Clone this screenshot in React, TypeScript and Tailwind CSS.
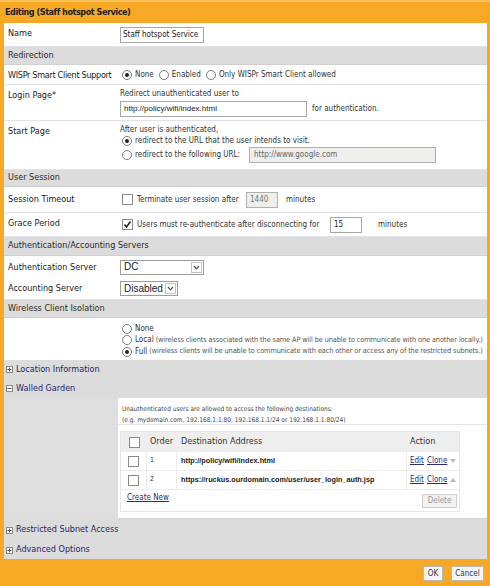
import React from "react";

const font = { fontFamily: '"DejaVu Sans Condensed", "DejaVu Sans", sans-serif' } as const;
const arial = { fontFamily: '"Liberation Sans", Arial, sans-serif' } as const;

const Radio = ({ on }: { on?: boolean }) => (
  <span className="inline-flex w-[10px] h-[10px] rounded-full border border-[#7a7a7a] bg-white items-center justify-center shrink-0">
    {on && <span className="w-[4px] h-[4px] rounded-full bg-[#222]" />}
  </span>
);

const Check = ({ on }: { on?: boolean }) => (
  <span className="inline-flex w-[11px] h-[11px] border border-[#8a8a8a] bg-white items-center justify-center shrink-0">
    {on && (
      <svg width="9" height="9" viewBox="0 0 9 9">
        <path d="M1.5 4.5 L3.5 7 L7.5 1.5" fill="none" stroke="#222" strokeWidth="1.6" />
      </svg>
    )}
  </span>
);

const Select = ({ value, w }: { value: string; w: string }) => (
  <div className={`flex items-center h-[15px] border border-[#9c9c9c] bg-white ${w}`}>
    <span className="flex-1 pl-[3px] text-[10px] text-[#222] leading-none" style={arial}>
      {value}
    </span>
    <span className="w-[11px] h-[11px] mr-[1px] border border-[#c4c4c4] flex items-center justify-center">
      <svg width="7" height="5" viewBox="0 0 7 5">
        <path d="M1 1 L3.5 3.8 L6 1" fill="none" stroke="#555" strokeWidth="1.2" />
      </svg>
    </span>
  </div>
);

const Box = ({ minus }: { minus?: boolean }) => (
  <span className="inline-flex w-[7px] h-[7px] border border-[#8a8a8a] bg-white items-center justify-center shrink-0 mr-[3px]">
    <svg width="5" height="5" viewBox="0 0 5 5">
      <path d="M0.5 2.5 H4.5" stroke="#555" strokeWidth="1" />
      {!minus && <path d="M2.5 0.5 V4.5" stroke="#555" strokeWidth="1" />}
    </svg>
  </span>
);

const Label = ({ children, pt }: { children: React.ReactNode; pt: string }) => (
  <div className={`w-[114px] shrink-0 pl-[4px] text-[9px] leading-[11px] text-[#1a1a1a] whitespace-nowrap ${pt}`}>{children}</div>
);

const Section = ({ children, h }: { children: React.ReactNode; h: string }) => (
  <div className={`flex items-center bg-[#dcdcdc] pl-[4px] text-[9px] text-[#2a2a2a] border-b border-[#d0d0d0] ${h}`}>{children}</div>
);

const Fold = ({ children, h, minus }: { children: React.ReactNode; h: string; minus?: boolean }) => (
  <div className={`flex items-center bg-[#dcdcdc] pl-[2px] text-[9px] text-[#24246a] ${h}`}>
    <Box minus={minus} />
    {children}
  </div>
);

export default function App() {
  return (
    <div className="w-[490px] h-[586px] bg-[#f7a825] flex flex-col overflow-hidden" style={font}>
      <div className="h-[23px] shrink-0 border-t-2 border-[#fbc25c] px-[5px] flex items-center font-bold text-[9px] tracking-[-0.45px] text-[#222]">
        Editing (Staff hotspot Service)
      </div>
      <div className="ml-[4px] mr-[3px] bg-white flex flex-col shrink-0">
        <div className="flex h-[24px] border-b border-[#e2e2e8]">
          <Label pt="pt-[5px]">Name</Label>
          <div className="pt-[4px] pl-[2px]">
            <div className="w-[84px] h-[16px] border border-[#a8a8a8] flex items-center pl-[2px] text-[8px] text-[#222]">Staff hotspot Service</div>
          </div>
        </div>
        <Section h="h-[18px]">Redirection</Section>
        <div className="flex h-[20px] border-b border-[#e2e2e8]">
          <Label pt="pt-[5px]">
            <span className="tracking-[-0.3px]">WISPr Smart Client Support</span>
          </Label>
          <div className="flex items-center pl-[4px] text-[8px] text-[#333]">
            <Radio on />
            <span className="ml-[3px] mr-[5px]">None</span>
            <Radio />
            <span className="ml-[3px] mr-[5px]">Enabled</span>
            <Radio />
            <span className="ml-[3px]">Only WISPr Smart Client allowed</span>
          </div>
        </div>
        <div className="flex h-[36px] border-b border-[#e2e2e8]">
          <Label pt="pt-[5px]">Login Page*</Label>
          <div className="pl-[2px] pt-[3px] text-[8px] text-[#333]">
            <div className="leading-[11px]">Redirect unauthenticated user to</div>
            <div className="flex items-center mt-[2px]">
              <div className="w-[187px] h-[16px] border border-[#a8a8a8] flex items-center pl-[3px] text-[8px] text-[#222]" style={arial}>
                http://policy/wifi/index.html
              </div>
              <span className="ml-[5px]">for authentication.</span>
            </div>
          </div>
        </div>
        <div className="flex h-[49px] border-b border-[#e2e2e8]">
          <Label pt="pt-[5px]">Start Page</Label>
          <div className="pl-[2px] pt-[3px] text-[8px] text-[#333]">
            <div className="leading-[11px]">After user is authenticated,</div>
            <div className="flex items-center pl-[2px] h-[12px]">
              <Radio on />
              <span className="ml-[3px]">redirect to the URL that the user intends to visit.</span>
            </div>
            <div className="flex items-center pl-[2px] h-[16px]">
              <Radio />
              <span className="ml-[3px] w-[114px]">redirect to the following URL:</span>
              <div className="w-[187px] h-[16px] border border-[#b0b0b0] bg-[#eeeeec] flex items-center pl-[4px] text-[#666]">http://www.google.com</div>
            </div>
          </div>
        </div>
        <Section h="h-[17px]">User Session</Section>
        <div className="flex h-[26px] border-b border-[#e2e2e8]">
          <Label pt="pt-[7px]">Session Timeout</Label>
          <div className="flex items-center pl-[4px] text-[8px] text-[#333]">
            <Check />
            <span className="ml-[4px] w-[105px]">Terminate user session after</span>
            <div className="ml-[4px] w-[32px] h-[16px] border border-[#b0b0b0] bg-[#eeeeec] flex items-center pl-[3px] text-[#777]">1440</div>
            <span className="ml-[8px]">minutes</span>
          </div>
        </div>
        <div className="flex h-[24px] border-b border-[#e2e2e8]">
          <Label pt="pt-[5px]">Grace Period</Label>
          <div className="flex items-center pl-[4px] text-[8px] text-[#333]">
            <Check on />
            <span className="ml-[4px] w-[189px]">Users must re-authenticate after disconnecting for</span>
            <div className="ml-[4px] w-[32px] h-[16px] border border-[#a8a8a8] flex items-center pl-[3px] text-[#222]">15</div>
            <span className="ml-[16px]">minutes</span>
          </div>
        </div>
        <Section h="h-[19px]">Authentication/Accounting Servers</Section>
        <div className="flex h-[22px]">
          <Label pt="pt-[6px]">Authentication Server</Label>
          <div className="flex items-center pl-[2px]">
            <Select value="DC" w="w-[84px]" />
          </div>
        </div>
        <div className="flex h-[22px] border-b border-[#e2e2e8]">
          <Label pt="pt-[5px]">Accounting Server</Label>
          <div className="flex items-center pl-[2px]">
            <Select value="Disabled" w="w-[58px]" />
          </div>
        </div>
        <Section h="h-[18px]">Wireless Client Isolation</Section>
        <div className="flex h-[42px]">
          <Label pt="pt-[5px]">{""}</Label>
          <div className="pl-[4px] pt-[5px] text-[8px] text-[#333] flex flex-col">
            <div className="flex items-center h-[11.5px]">
              <Radio />
              <span className="ml-[3px]">None</span>
            </div>
            <div className="flex items-center h-[11.5px] whitespace-nowrap">
              <Radio />
              <span className="ml-[3px]">Local</span>
              <span className="ml-[2px] text-[7.3px] text-[#555] tracking-[-0.1px]">(wireless clients associated with the same AP will be unable to communicate with one another locally.)</span>
            </div>
            <div className="flex items-center h-[11.5px] whitespace-nowrap">
              <Radio on />
              <span className="ml-[3px]">Full</span>
              <span className="ml-[2px] text-[7.3px] text-[#555] tracking-[-0.1px]">(wireless clients will be unable to communicate with each other or access any of the restricted subnets.)</span>
            </div>
          </div>
        </div>
        <Fold h="h-[19px]">Location Information</Fold>
        <Fold h="h-[19px]" minus>
          Walled Garden
        </Fold>
        <div className="flex h-[121px] bg-[#dedede]">
          <div className="w-[114px] shrink-0" />
          <div className="flex-1 bg-white flex flex-col border-b border-[#d4d4d4]">
            <div className="pl-[4px] pt-[6px] text-[6.5px] leading-[11px] text-[#444] h-[27px] border-b border-[#e4e4e4]">
              <div>Unauthenticated users are allowed to access the following destinations:</div>
              <div>(e.g. mydomain.com, 192.168.1.1:80, 192.168.1.1/24 or 192.168.1.1:80/24)</div>
            </div>
            <div className="ml-[2px] mt-[6px] w-[340px] border border-[#e6e6e6] text-[#333]">
              <div className="flex h-[20px] bg-[#eeeeee] items-center text-[9px]">
                <div className="w-[26px] flex justify-center">
                  <Check />
                </div>
                <div className="w-[30px] pl-[3px]">Order</div>
                <div className="w-[230px] pl-[4px]">Destination Address</div>
                <div className="flex-1 pl-[3px]">Action</div>
              </div>
              {[
                ["1", "http://policy/wifi/index.html", "down"],
                ["2", "https://ruckus.ourdomain.com/user/user_login_auth.jsp", "up"],
              ].map(([n, url, dir]) => (
                <div key={n} className="flex h-[19px] items-center border-b border-[#ececec] text-[8px]">
                  <div className="w-[26px] h-full flex items-center justify-center border-r border-[#ececec]">
                    <Check />
                  </div>
                  <div className="w-[30px] h-full pl-[3px] pt-[3px] text-[7px] border-r border-[#ececec]">{n}</div>
                  <div className="w-[230px] h-full flex items-center pl-[4px] font-bold text-[7.3px] text-[#222] border-r border-[#ececec]" style={arial}>
                    {url}
                  </div>
                  <div className="flex-1 flex items-center pl-[3px] gap-[3px] text-[8px] text-[#2c2c72]">
                    <span className="underline">Edit</span>
                    <span className="underline">Clone</span>
                    <svg width="6" height="4" viewBox="0 0 6 4">
                      {dir === "down" ? <path d="M0 0 H6 L3 4 Z" fill="#b8b8c4" /> : <path d="M0 4 H6 L3 0 Z" fill="#b8b8c4" />}
                    </svg>
                  </div>
                </div>
              ))}
              <div className="flex h-[21px] items-center justify-between pl-[6px] pr-[2px] text-[8px]">
                <span className="underline text-[#2c2c72] self-start pt-[2px]">Create New</span>
                <div className="w-[35px] h-[14px] border border-[#cfcfcf] bg-[#f2f2f2] flex items-center justify-center text-[#999]">Delete</div>
              </div>
            </div>
          </div>
        </div>
        <Fold h="h-[22px]">Restricted Subnet Access</Fold>
        <Fold h="h-[18px]">Advanced Options</Fold>
      </div>
      <div className="flex-1 flex items-start justify-end gap-[8px] pr-[6px] pt-[7px] text-[8px] text-[#333]">
        <div className="w-[20px] h-[15px] bg-[#f6f6f6] border border-[#b8b8b8] flex items-center justify-center">OK</div>
        <div className="w-[33px] h-[15px] bg-[#f6f6f6] border border-[#b8b8b8] flex items-center justify-center">Cancel</div>
      </div>
    </div>
  );
}
